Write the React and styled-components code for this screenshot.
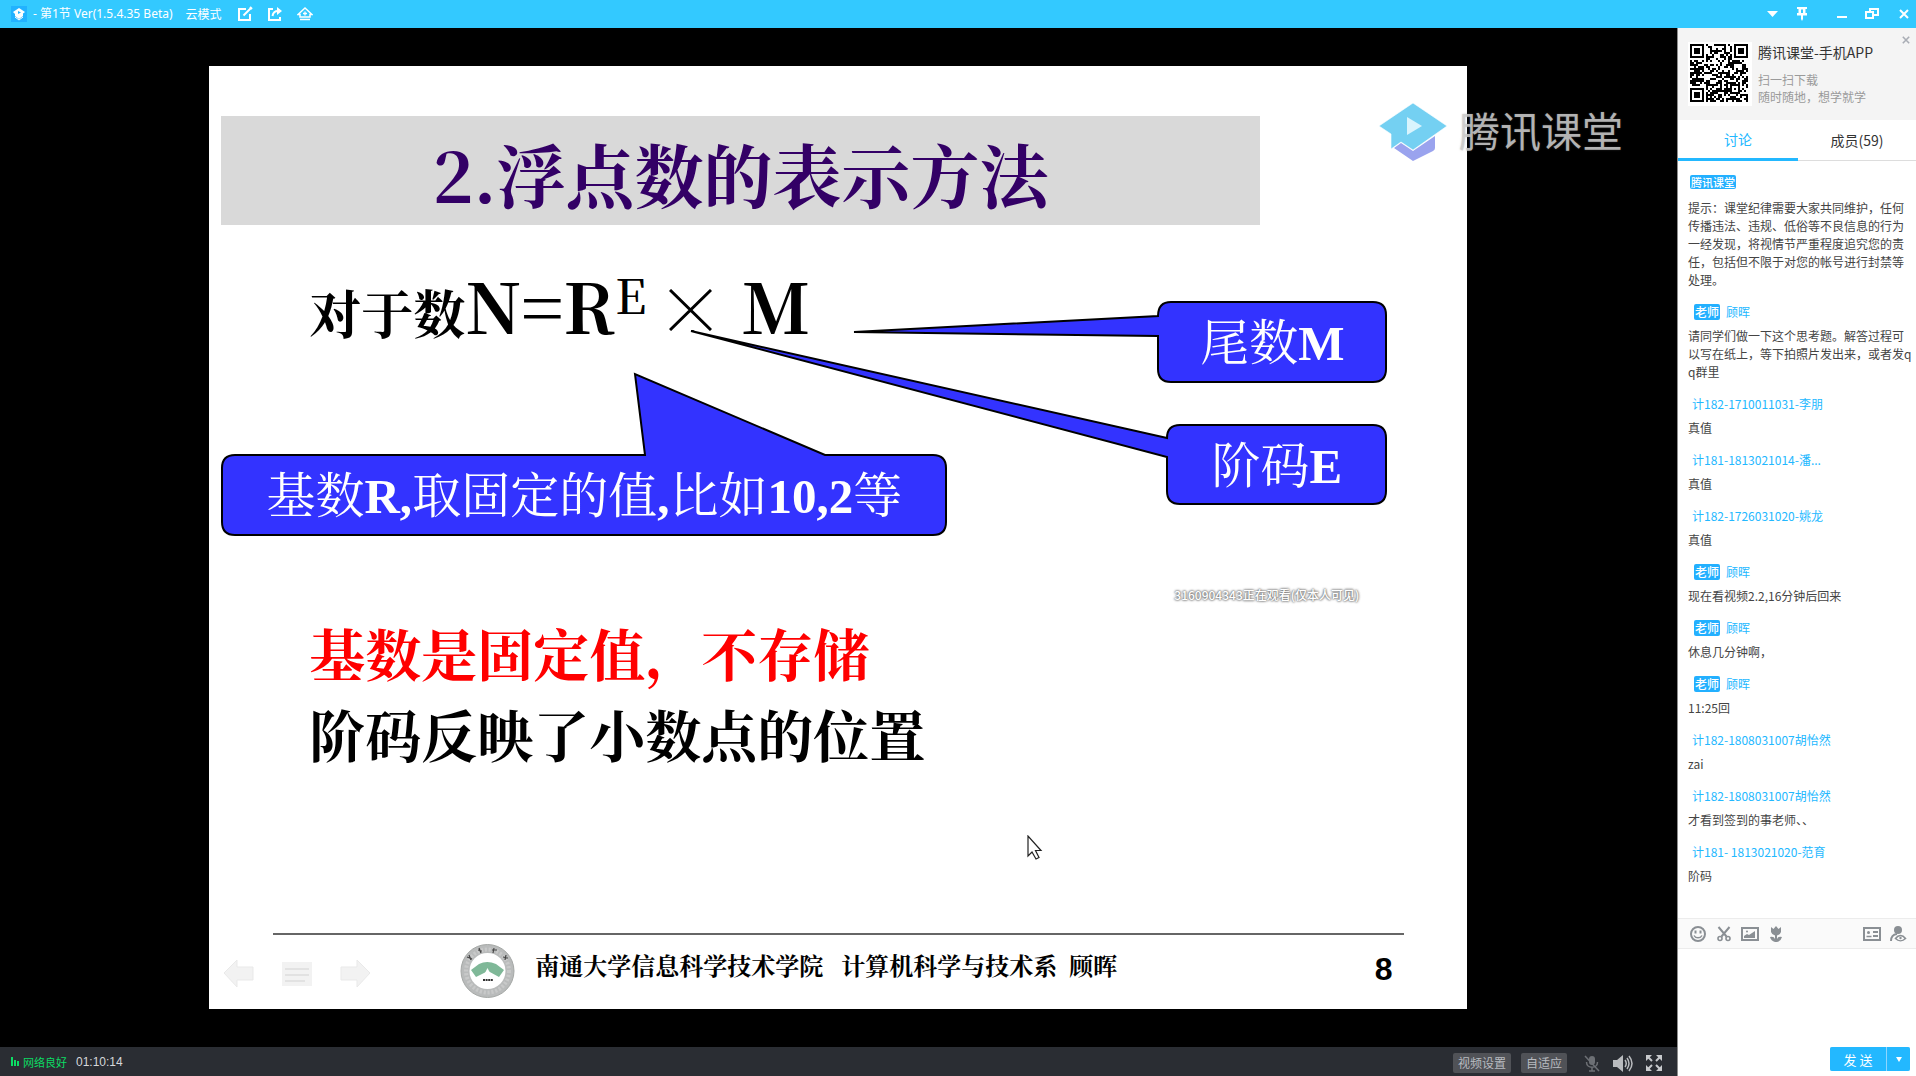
import React from "react";
import styled, { createGlobalStyle } from "styled-components";

const SANS = `"Noto Sans CJK SC", "Noto Sans", sans-serif`;
const SONG = `"Liberation Serif", "Noto Serif CJK SC", "Noto Sans CJK SC", serif`;
const HEADLINE = `"Noto Serif CJK SC", "Liberation Serif", serif`;

const GlobalStyle = createGlobalStyle`
  * { box-sizing: border-box; }
  body { margin: 0; font-family: ${SANS}; font-size: 12px; color: #444; }
  button, textarea { font: inherit; color: inherit; }
  h1, h2, p { margin: 0; font-weight: inherit; font-size: inherit; }
  svg { display: block; flex: none; }
`;

const Window = styled.div`
  display: flex;
  flex-direction: column;
  height: 100vh;
  overflow: hidden;
  background: #000;
`;

/* ---------- title bar ---------- */
const TitleBar = styled.header`
  display: flex;
  align-items: center;
  flex: none;
  height: 28px;
  padding-left: 11px;
  background: #33c9ff;
  color: #fff;
`;
const AppIcon = styled.span`
  display: grid;
  place-items: center;
  width: 16px;
  height: 16px;
  margin-right: 6px;
  background: #22b2ff;
`;
const WindowTitle = styled.h1`
  font-family: "Noto Sans", "Noto Sans CJK SC", sans-serif;
  font-size: 12px;
  line-height: 18px;
  white-space: pre;
`;
const Mode = styled.span`
  margin: 0 8px 0 13px;
  line-height: 18px;
`;
const WindowControls = styled.div`
  display: flex;
  margin-left: 15px;
`;
const IconButton = styled.button`
  display: grid;
  place-items: center;
  width: ${(p) => p.$w || 30}px;
  height: 24px;
  padding: 0;
  border: 0;
  background: none;
  color: ${(p) => p.$color || "inherit"};
`;
const Spacer = styled.div`
  flex: 1;
`;

/* ---------- main area ---------- */
const Body = styled.div`
  display: flex;
  flex: 1;
  min-height: 0;
`;
const Main = styled.main`
  display: flex;
  flex-direction: column;
  flex: 1;
  min-width: 0;
`;
const Stage = styled.section`
  position: relative;
  display: flex;
  justify-content: center;
  flex: 1;
  min-height: 0;
  padding: 38px 1px 38px 0;
`;
const Slide = styled.article`
  position: relative;
  display: flex;
  flex-direction: column;
  height: 100%;
  aspect-ratio: 4 / 3;
  background: #fff;
  color: #000;
  font-family: ${SONG};
`;
const SlideTitle = styled.h2`
  margin: 50px 207px 0 12px;
  padding-top: 8px;
  height: 109px;
  background: #d9d9d9;
  color: #330066;
  font-family: ${HEADLINE};
  font-size: 69px;
  font-weight: 700;
  line-height: 100px;
  text-align: center;
  white-space: nowrap;
`;
const Formula = styled.p`
  display: flex;
  align-items: baseline;
  height: 88px;
  margin: 36px 0 0 100px;
  font-family: ${HEADLINE};
  font-size: 69px;
  font-weight: 700;
  line-height: 88px;
  white-space: pre;
`;
const FormulaLead = styled.span`
  font-size: 52px;
`;
const Exponent = styled.sup`
  align-self: flex-start;
  font-size: 48px;
  font-weight: 500;
  line-height: 66px;
`;
const Times = styled.svg`
  align-self: center;
  margin: 10px 30px 0 22px;
`;
const Conclusions = styled.div`
  margin: 268px 0 0 100px;
  font-size: 56px;
  font-weight: 700;
  line-height: 81px;
  white-space: nowrap;
`;
const Conclusion = styled.p`
  color: ${(p) => (p.$highlight ? "#ff0000" : "#000")};
`;

const CalloutShapes = styled.svg`
  position: absolute;
  inset: 0;
`;
const CalloutLabel = styled.p`
  position: absolute;
  left: ${(p) => p.$x}px;
  top: ${(p) => p.$y}px;
  width: ${(p) => p.$w}px;
  height: 82px;
  color: #fff;
  font-size: 49px;
  line-height: 86px;
  text-align: center;
  white-space: nowrap;
  b { font-weight: 700; }
`;
const ViewerMark = styled.p`
  position: absolute;
  left: 965px;
  top: 520px;
  color: #fff;
  font: 500 12px/18px ${SANS};
  white-space: nowrap;
  text-shadow: 0 0 2px #777, 0 0 2px #777, 0 0 3px #888;
`;
const Pointer = styled.svg`
  position: absolute;
  left: 818px;
  top: 769px;
`;
const SlideFooter = styled.footer`
  display: flex;
  align-items: center;
  height: 76px;
  margin-top: auto;
  padding: 0 74px 0 15px;
  background: linear-gradient(#666, #666) 64px 0 / calc(100% - 127px) 2px no-repeat;
`;
const SlideNav = styled.nav`
  display: flex;
  gap: 28px;
  padding-top: 6px;
  margin-right: 90px;
`;
const NavButton = styled.button`
  display: block;
  padding: 0;
  border: 0;
  background: none;
`;
const School = styled.p`
  margin: 0 0 8px 20px;
  font-size: 24px;
  font-weight: 700;
  line-height: 32px;
  white-space: pre;
`;
const PageNumber = styled.span`
  margin: 0 0 4px auto;
  font: 700 32px/36px "Liberation Sans", Arial, sans-serif;
`;

const Brand = styled.div`
  position: absolute;
  top: 75px;
  right: 54px;
  display: flex;
  align-items: flex-start;
  gap: 12px;
  color: rgba(205, 205, 205, 0.85);
  font-size: 41px;
  line-height: 52px;
  text-shadow: 0 0 2px rgba(120, 120, 120, 0.4);
`;

/* ---------- player bar ---------- */
const PlayerBar = styled.footer`
  display: flex;
  align-items: center;
  flex: none;
  height: 29px;
  padding: 0 8px 0 11px;
  background: #2a2d33;
  color: #d5d7da;
`;
const Network = styled.span`
  display: flex;
  align-items: center;
  gap: 4px;
  margin-right: 9px;
  color: #0cdc64;
  font-size: 11px;
`;
const Clock = styled.time`
  font: 12px/20px "Liberation Sans", Arial, sans-serif;
`;
const BarButton = styled.button`
  height: 20px;
  margin: 3px 10px 0 0;
  padding: 0 5px;
  border: 0;
  border-radius: 2px;
  background: #505257;
  color: #b8bbc0;
  font-size: 12px;
  line-height: 20px;
`;
const BarIcons = styled.div`
  display: flex;
  align-items: center;
  padding-top: 3px;
`;

/* ---------- side panel ---------- */
const Side = styled.aside`
  display: flex;
  flex-direction: column;
  flex: none;
  width: 239px;
  border-left: 1px solid #8c8c8c;
  background: #fff;
`;
const Promo = styled.section`
  position: relative;
  display: flex;
  gap: 6px;
  height: 92px;
  padding: 14px 10px;
  background: #f4f4f4;
`;
const PromoTitle = styled.h2`
  margin-bottom: 9px;
  color: #333;
  font-size: 14px;
  line-height: 20px;
`;
const PromoLine = styled.p`
  color: #9a9a9a;
  line-height: 17px;
`;
const PromoClose = styled.button`
  position: absolute;
  top: 6px;
  right: 4px;
  display: grid;
  place-items: center;
  width: 12px;
  height: 12px;
  padding: 0;
  border: 0;
  background: none;
`;
const Tabs = styled.div`
  display: grid;
  grid-template-columns: 120px 1fr;
  flex: none;
  height: 41px;
`;
const Tab = styled.button`
  padding: 0;
  border: 0;
  border-bottom: ${(p) => (p.$active ? "3px solid #23b8ff" : "1px solid #ddd")};
  background: none;
  color: ${(p) => (p.$active ? "#23b8ff" : "#333")};
  font-size: 14px;
  line-height: 36px;
`;
const Chat = styled.ul`
  flex: 1;
  min-height: 0;
  margin: 0;
  padding: 12px 2px 0 10px;
  overflow: hidden;
  list-style: none;
`;
const Message = styled.li`
  display: flex;
  flex-direction: column;
  gap: ${(p) => (p.$system ? 8 : 6)}px;
  margin-bottom: 14px;
  line-height: 18px;
`;
const Sender = styled.div`
  display: flex;
  align-items: center;
  gap: 6px;
  height: 18px;
  padding-left: ${(p) => (p.$badge ? 6 : 4)}px;
  color: #23b8ff;
`;
const SystemSender = styled(Sender)`
  padding-left: 2px;
`;
const Badge = styled.span`
  padding: 0 1px;
  border-radius: 2px;
  background: #23b0ff;
  color: #fff;
  font-size: ${(p) => (p.$wide ? 11 : 12)}px;
  font-weight: 500;
  line-height: ${(p) => (p.$wide ? 14 : 16)}px;
`;
const MessageText = styled.p`
  word-break: break-all;
`;
const Tools = styled.div`
  display: flex;
  align-items: center;
  flex: none;
  height: 31px;
  padding: 0 5px 0 7px;
  border: solid #ececec;
  border-width: 1px 0;
  background: #fafafa;
`;
const Composer = styled.div`
  display: flex;
  flex-direction: column;
  flex: none;
  height: 127px;
  padding: 0 6px 5px;
`;
const Input = styled.textarea`
  flex: 1;
  padding: 6px 4px;
  border: 0;
  outline: 0;
  resize: none;
`;
const SendGroup = styled.div`
  display: flex;
  align-self: flex-end;
  gap: 1px;
  border-radius: 2px;
  overflow: hidden;
  background: #8fd6ff;
`;
const SendButton = styled.button`
  display: grid;
  place-items: center;
  width: ${(p) => p.$w}px;
  height: 24px;
  padding: 0;
  border: 0;
  background: #23b8ff;
  color: #fff;
  font-size: 13px;
`;

/* ---------- drawings ---------- */
const line = { fill: "none", stroke: "currentColor", strokeWidth: 2 };

const EditIcon = () => (
  <svg width="16" height="16" viewBox="0 0 16 16" {...line}>
    <path d="M9 3H2v11h11V8" />
    <path d="M6.500 9.500L14 2" />
    <path d="M13 1l2 2" />
  </svg>
);
const ShareIcon = () => (
  <svg width="16" height="16" viewBox="0 0 16 16" {...line}>
    <path d="M6 3H2v11h11v-3" />
    <path d="M5.500 10c.5-3 2.500-5 5.500-5" />
    <path d="M10 1l5 4-5 4z" fill="currentColor" stroke="none" />
  </svg>
);
const HomeIcon = () => (
  <svg width="16" height="16" viewBox="0 0 16 16" {...line} strokeWidth="1.500">
    <path d="M3 8.500H1L8 2l7 6.500h-2V11H3z" />
    <path d="M8 5.500v4M6 7.500h4" strokeWidth="1.300" />
    <path d="M3 13.500h10" />
  </svg>
);
const PinIcon = () => (
  <svg width="12" height="14" viewBox="0 0 12 14" fill="currentColor">
    <path fillRule="evenodd" d="M1 0h10v2H9.500v4H11v2.500H7V12l-1 2-1-2V8.500H1V6h1.500V2H1zM5 2.500v3.500h2V2.500z" />
  </svg>
);
const RestoreIcon = () => (
  <svg width="14" height="12" viewBox="0 0 14 12" {...line}>
    <path d="M1 4h7v6H1z" />
    <path d="M5 4V1h8v6H8" />
  </svg>
);
const CrossIcon = ({ size, color = "currentColor" }) => (
  <svg width={size} height={size} viewBox="0 0 10 10" fill="none" stroke={color} strokeWidth="2">
    <path d="M1 1l8 8M9 1L1 9" />
  </svg>
);
const CapIcon = () => (
  <svg width="14" height="14" viewBox="0 0 14 14">
    <path d="M7 1l6 4-2 1.500V9l-4 3-4-3V7L1 5z" fill="#fff" />
    <path d="M6 4l3 1.500L6 7z" fill="#22b2ff" />
    <path d="M3 10l4 3 4-3" fill="none" stroke="#fff" strokeWidth="1" />
  </svg>
);
const BrandIcon = () => (
  <svg width="68" height="58" viewBox="0 0 68 58">
    <path d="M15 45l7-5 12 8 22-15v12q0 2-2 3L34 58z" fill="#9aa3ee" />
    <path d="M34 0l34 23-34 24-12-8-10 7V31L0 23z" fill="#74d0f2" stroke="#fff" strokeWidth="1" strokeOpacity=".6" />
    <path d="M28 14l15 9-15 9z" fill="#d9f4fd" />
  </svg>
);
const SmileIcon = () => (
  <svg width="16" height="16" viewBox="0 0 16 16" {...line}>
    <circle cx="8" cy="8" r="7" />
    <path d="M5.500 4.500v3M10.500 4.500v3" />
    <path d="M4 9.500c1.500 3 6.500 3 8 0" strokeWidth="1.500" />
  </svg>
);
const ScissorsIcon = () => (
  <svg width="14" height="16" viewBox="0 0 14 16" {...line}>
    <path d="M1.500 1l8 9.500M12.500 1l-8 9.500" />
    <circle cx="3" cy="12.500" r="2" strokeWidth="1.600" />
    <circle cx="11" cy="12.500" r="2" strokeWidth="1.600" />
  </svg>
);
const ImageIcon = () => (
  <svg width="18" height="14" viewBox="0 0 18 14" {...line}>
    <path d="M1 1h16v12H1z" />
    <path d="M3 11V9l3-2 2 1 6-4v7z" fill="currentColor" stroke="none" />
    <circle cx="6" cy="4.500" r="1" fill="currentColor" stroke="none" />
  </svg>
);
const FlowerIcon = () => (
  <svg width="12" height="16" viewBox="0 0 12 16" fill="currentColor">
    <path d="M1 1l2.500 2L6 0l2.500 3L11 1v5q-1 3-4 3.500V13q1-3 5-2-1 4-5 5H5q-4-1-5-5 4-1 5 2V9.500Q2 9 1 6z" />
  </svg>
);
const CardIcon = () => (
  <svg width="18" height="14" viewBox="0 0 18 14" {...line}>
    <path d="M1 1h16v12H1z" />
    <path d="M10 5h5M10 9h5" />
    <circle cx="5.500" cy="5.500" r="1.500" fill="currentColor" stroke="none" />
    <path d="M3.500 9.500h5" strokeWidth="1.500" />
  </svg>
);
const PersonIcon = () => (
  <svg width="17" height="16" viewBox="0 0 17 16" {...line}>
    <circle cx="8" cy="4" r="4" fill="currentColor" stroke="none" />
    <path d="M1 15c0-4 2-6.500 6-7" />
    <path d="M5.500 12.500c3-4 7-4 10 0-3 3-7 3-10 0z" strokeWidth="1.600" />
    <circle cx="10.500" cy="12" r="1.200" fill="currentColor" stroke="none" />
  </svg>
);
const MicIcon = () => (
  <svg width="16" height="17" viewBox="0 0 16 17" fill="none" stroke="#6d7075" strokeWidth="1.500">
    <rect x="5" y="1" width="6" height="9" rx="3" fill="#6d7075" stroke="none" />
    <path d="M2.500 7c0 7 11 7 11 0M8 12.500V16M5 16h6M1 1l14 15" />
  </svg>
);
const SpeakerIcon = () => (
  <svg width="20" height="17" viewBox="0 0 20 17" fill="none" stroke="#b9bbbe" strokeWidth="1.500">
    <path d="M0 5h4l6-5v17l-6-5H0z" fill="#b9bbbe" stroke="none" />
    <path d="M12 5q2.500 3.500 0 7M14 3q4 5.500 0 11M16 1q6 7.500 0 15" />
  </svg>
);
const FullIcon = () => (
  <svg width="16" height="16" viewBox="0 0 16 16" fill="#c8cacd" stroke="#c8cacd" strokeWidth="2">
    <path d="M2 2l4 4M14 2l-4 4M2 14l4-4M14 14l-4-4" />
    <path stroke="none" d="M0 0h6L0 6zM16 0v6l-6-6zM0 16v-6l6 6zM16 16h-6l6-6z" />
  </svg>
);
const Seal = () => (
  <svg width="55" height="54" viewBox="0 0 55 54">
    <circle cx="27.500" cy="27" r="26.500" fill="#b9bbbb" stroke="#a5a8a6" />
    <circle cx="27.500" cy="27" r="21.500" fill="none" stroke="#d8d8d8" strokeWidth="4" strokeDasharray="2 1.500" pathLength="120" opacity=".5" />
    <circle cx="27.500" cy="27" r="18" fill="#fff" />
    <path d="M11 26l8-6q8-4 17 0l8 6-5 7-11-6-12 6z" fill="#7fb898" />
    <path d="M27.500 24l3 6h-6z" fill="#fff" />
    <path d="M23 36h10" stroke="#333" strokeWidth="2" strokeDasharray="2 .6" />
    <g stroke="#444" strokeWidth="1.200" fill="none">
      <path d="M7 13l5 2M9 11l2 5M18 6l4 1M19 4l2 5M32 6h5M34 4l-1 5M43 13l5 1M46 11l-1 5" />
    </g>
  </svg>
);
const arrow = "M0 13L13 0v7h16v13H13v7z";

const QR_SIZE = 29;
function qrModules() {
  const cells = [];
  let seed = 20200311;
  const eyes = [[0, 0], [22, 0], [0, 22]];
  for (let y = 0; y < QR_SIZE; y++) {
    for (let x = 0; x < QR_SIZE; x++) {
      seed = (seed * 1103515245 + 12345) % 2147483648;
      let on = (seed >> 16) % 100 < 52;
      for (const [ex, ey] of eyes) {
        const dx = Math.abs(x - ex - 3);
        const dy = Math.abs(y - ey - 3);
        const d = Math.max(dx, dy);
        if (d <= 4) on = d === 3 || d <= 1;
      }
      const a = Math.max(Math.abs(x - 22), Math.abs(y - 22));
      if (a <= 2) on = a !== 1;
      if (on) cells.push(`M${x} ${y}h1v1h-1z`);
    }
  }
  return cells.join("");
}
const QR_PATH = qrModules();
const QrCode = () => (
  <svg width="64" height="64" viewBox="-1 -1 32 32" shapeRendering="crispEdges">
    <path d="M-2-2h34v34h-34z" fill="#fff" />
    <path d={QR_PATH} />
  </svg>
);

const messages = [
  { teacher: true, name: "顾晖", text: "请同学们做一下这个思考题。解答过程可以写在纸上，等下拍照片发出来，或者发qq群里" },
  { name: "计182-1710011031-李朋", text: "真值" },
  { name: "计181-1813021014-潘...", text: "真值" },
  { name: "计182-1726031020-姚龙", text: "真值" },
  { teacher: true, name: "顾晖", text: "现在看视频2.2,16分钟后回来" },
  { teacher: true, name: "顾晖", text: "休息几分钟啊，" },
  { teacher: true, name: "顾晖", text: "11:25回" },
  { name: "计182-1808031007胡怡然", text: "zai" },
  { name: "计182-1808031007胡怡然", text: "才看到签到的事老师、、" },
  { name: "计181- 1813021020-范育", text: "阶码" },
];

export default function App() {
  return (
    <Window>
      <GlobalStyle />
      <TitleBar>
        <AppIcon><CapIcon /></AppIcon>
        <WindowTitle>- 第1节 Ver(1.5.4.35 Beta)</WindowTitle>
        <Mode>云模式</Mode>
        <IconButton aria-label="编辑"><EditIcon /></IconButton>
        <IconButton aria-label="分享"><ShareIcon /></IconButton>
        <IconButton aria-label="主页"><HomeIcon /></IconButton>
        <Spacer />
        <IconButton aria-label="菜单">
          <svg width="11" height="6" viewBox="0 0 11 6" fill="currentColor"><path d="M0 0h11L5.500 6z" /></svg>
        </IconButton>
        <IconButton aria-label="置顶"><PinIcon /></IconButton>
        <WindowControls>
          <IconButton aria-label="最小化" $w={20}>
            <svg width="10" height="10" viewBox="0 0 10 10"><path d="M0 7h10v2H0z" fill="currentColor" /></svg>
          </IconButton>
          <IconButton aria-label="还原" $w={40}><RestoreIcon /></IconButton>
          <IconButton aria-label="关闭" $w={24}><CrossIcon size={10} /></IconButton>
        </WindowControls>
      </TitleBar>

      <Body>
        <Main>
          <Stage>
            <Slide>
              <SlideTitle>2.浮点数的表示方法</SlideTitle>
              <Formula>
                <FormulaLead>对于数</FormulaLead>N=R<Exponent>E</Exponent>
                <Times width="43" height="42" viewBox="0 0 43 42" stroke="#000" strokeWidth="3">
                  <path d="M1 1l41 40M42 1L1 41" />
                </Times>
                M
              </Formula>
              <Conclusions>
                <Conclusion $highlight>基数是固定值，不存储</Conclusion>
                <Conclusion>阶码反映了小数点的位置</Conclusion>
              </Conclusions>
              <SlideFooter>
                <SlideNav>
                  <NavButton aria-label="上一页">
                    <svg width="30" height="28" viewBox="0 0 30 28"><path d={arrow} fill="#f2f2f2" stroke="#e9e9e9" /></svg>
                  </NavButton>
                  <NavButton aria-label="目录">
                    <svg width="30" height="28" viewBox="0 0 30 28">
                      <path d="M0 2h30v24H0z" fill="#f2f2f2" />
                      <path d="M3 9h24M3 15h24M3 21h20" stroke="#e2e2e2" strokeWidth="2" />
                    </svg>
                  </NavButton>
                  <NavButton aria-label="下一页">
                    <svg width="30" height="28" viewBox="0 0 30 28"><path d={arrow} fill="#f2f2f2" stroke="#e9e9e9" transform="matrix(-1 0 0 1 30 0)" /></svg>
                  </NavButton>
                </SlideNav>
                <Seal />
                <School>南通大学信息科学技术学院   计算机科学与技术系  顾晖</School>
                <PageNumber>8</PageNumber>
              </SlideFooter>

              <CalloutShapes width="1257" height="480" viewBox="0 0 1257 480" fill="#3333ff" stroke="#000" strokeWidth="2">
                <path d="M962 236h202q13 0 13 13v54q0 13-13 13H962q-13 0-13-13V270L645 266 949 250q0-14 13-14z" />
                <path d="M971 359h193q13 0 13 13v53q0 13-13 13H971q-13 0-13-13V391L482 265 958 372q0-13 13-13z" />
                <path d="M26 389H436L426 308 616 389H724q13 0 13 13v54q0 13-13 13H26q-13 0-13-13V402q0-13 13-13z" />
              </CalloutShapes>
              <CalloutLabel $x={949} $y={235} $w={228}>尾数<b>M</b></CalloutLabel>
              <CalloutLabel $x={958} $y={358} $w={219}>阶码<b>E</b></CalloutLabel>
              <CalloutLabel $x={13} $y={388} $w={724}>
                基数<b>R,</b>取固定的值<b>,</b>比如<b>10,2</b>等
              </CalloutLabel>
              <ViewerMark>3160904343正在观看(仅本人可见)</ViewerMark>
              <Pointer width="16" height="26" viewBox="0 0 16 26" fill="#fff" stroke="#222" strokeWidth="1.200">
                <path d="M1 1v20l4-4 4 7 3-1.500-3.500-7H14z" />
              </Pointer>
            </Slide>
            <Brand><BrandIcon />腾讯课堂</Brand>
          </Stage>

          <PlayerBar>
            <Network>
              <svg width="8" height="9" viewBox="0 0 8 9" fill="currentColor"><path d="M0 0h2v9H0zM3 3h2v6H3zM6 4h2v5H6z" /></svg>
              网络良好
            </Network>
            <Clock>01:10:14</Clock>
            <Spacer />
            <BarButton>视频设置</BarButton>
            <BarButton>自适应</BarButton>
            <BarIcons>
              <IconButton aria-label="麦克风"><MicIcon /></IconButton>
              <IconButton aria-label="音量" $w={32}><SpeakerIcon /></IconButton>
              <IconButton aria-label="全屏"><FullIcon /></IconButton>
            </BarIcons>
          </PlayerBar>
        </Main>

        <Side>
          <Promo>
            <QrCode />
            <div>
              <PromoTitle>腾讯课堂-手机APP</PromoTitle>
              <PromoLine>扫一扫下载</PromoLine>
              <PromoLine>随时随地，想学就学</PromoLine>
            </div>
            <PromoClose aria-label="关闭推广"><CrossIcon size={8} color="#a9adb5" /></PromoClose>
          </Promo>
          <Tabs role="tablist">
            <Tab role="tab" aria-selected="true" $active>讨论</Tab>
            <Tab role="tab" aria-selected="false">成员(59)</Tab>
          </Tabs>
          <Chat>
            <Message $system>
              <SystemSender><Badge $wide>腾讯课堂</Badge></SystemSender>
              <MessageText>
                提示：课堂纪律需要大家共同维护，任何传播违法、违规、低俗等不良信息的行为一经发现，将视情节严重程度追究您的责任，包括但不限于对您的帐号进行封禁等处理。
              </MessageText>
            </Message>
            {messages.map((m, i) => (
              <Message key={i}>
                <Sender $badge={m.teacher}>
                  {m.teacher && <Badge>老师</Badge>}
                  {m.name}
                </Sender>
                <MessageText>{m.text}</MessageText>
              </Message>
            ))}
          </Chat>
          <Tools>
            <IconButton $w={26} $color="#8a8f94" aria-label="表情"><SmileIcon /></IconButton>
            <IconButton $w={26} $color="#8a8f94" aria-label="截图"><ScissorsIcon /></IconButton>
            <IconButton $w={26} $color="#8a8f94" aria-label="图片"><ImageIcon /></IconButton>
            <IconButton $w={26} $color="#8a8f94" aria-label="送花"><FlowerIcon /></IconButton>
            <Spacer />
            <IconButton $w={26} $color="#8a8f94" aria-label="名片"><CardIcon /></IconButton>
            <IconButton $w={26} $color="#8a8f94" aria-label="只看老师"><PersonIcon /></IconButton>
          </Tools>
          <Composer>
            <Input aria-label="输入消息" />
            <SendGroup>
              <SendButton $w={56}>发 送</SendButton>
              <SendButton $w={23} aria-label="发送选项">
                <svg width="6" height="5" viewBox="0 0 6 5" fill="currentColor"><path d="M0 0h6L3 5z" /></svg>
              </SendButton>
            </SendGroup>
          </Composer>
        </Side>
      </Body>
    </Window>
  );
}
